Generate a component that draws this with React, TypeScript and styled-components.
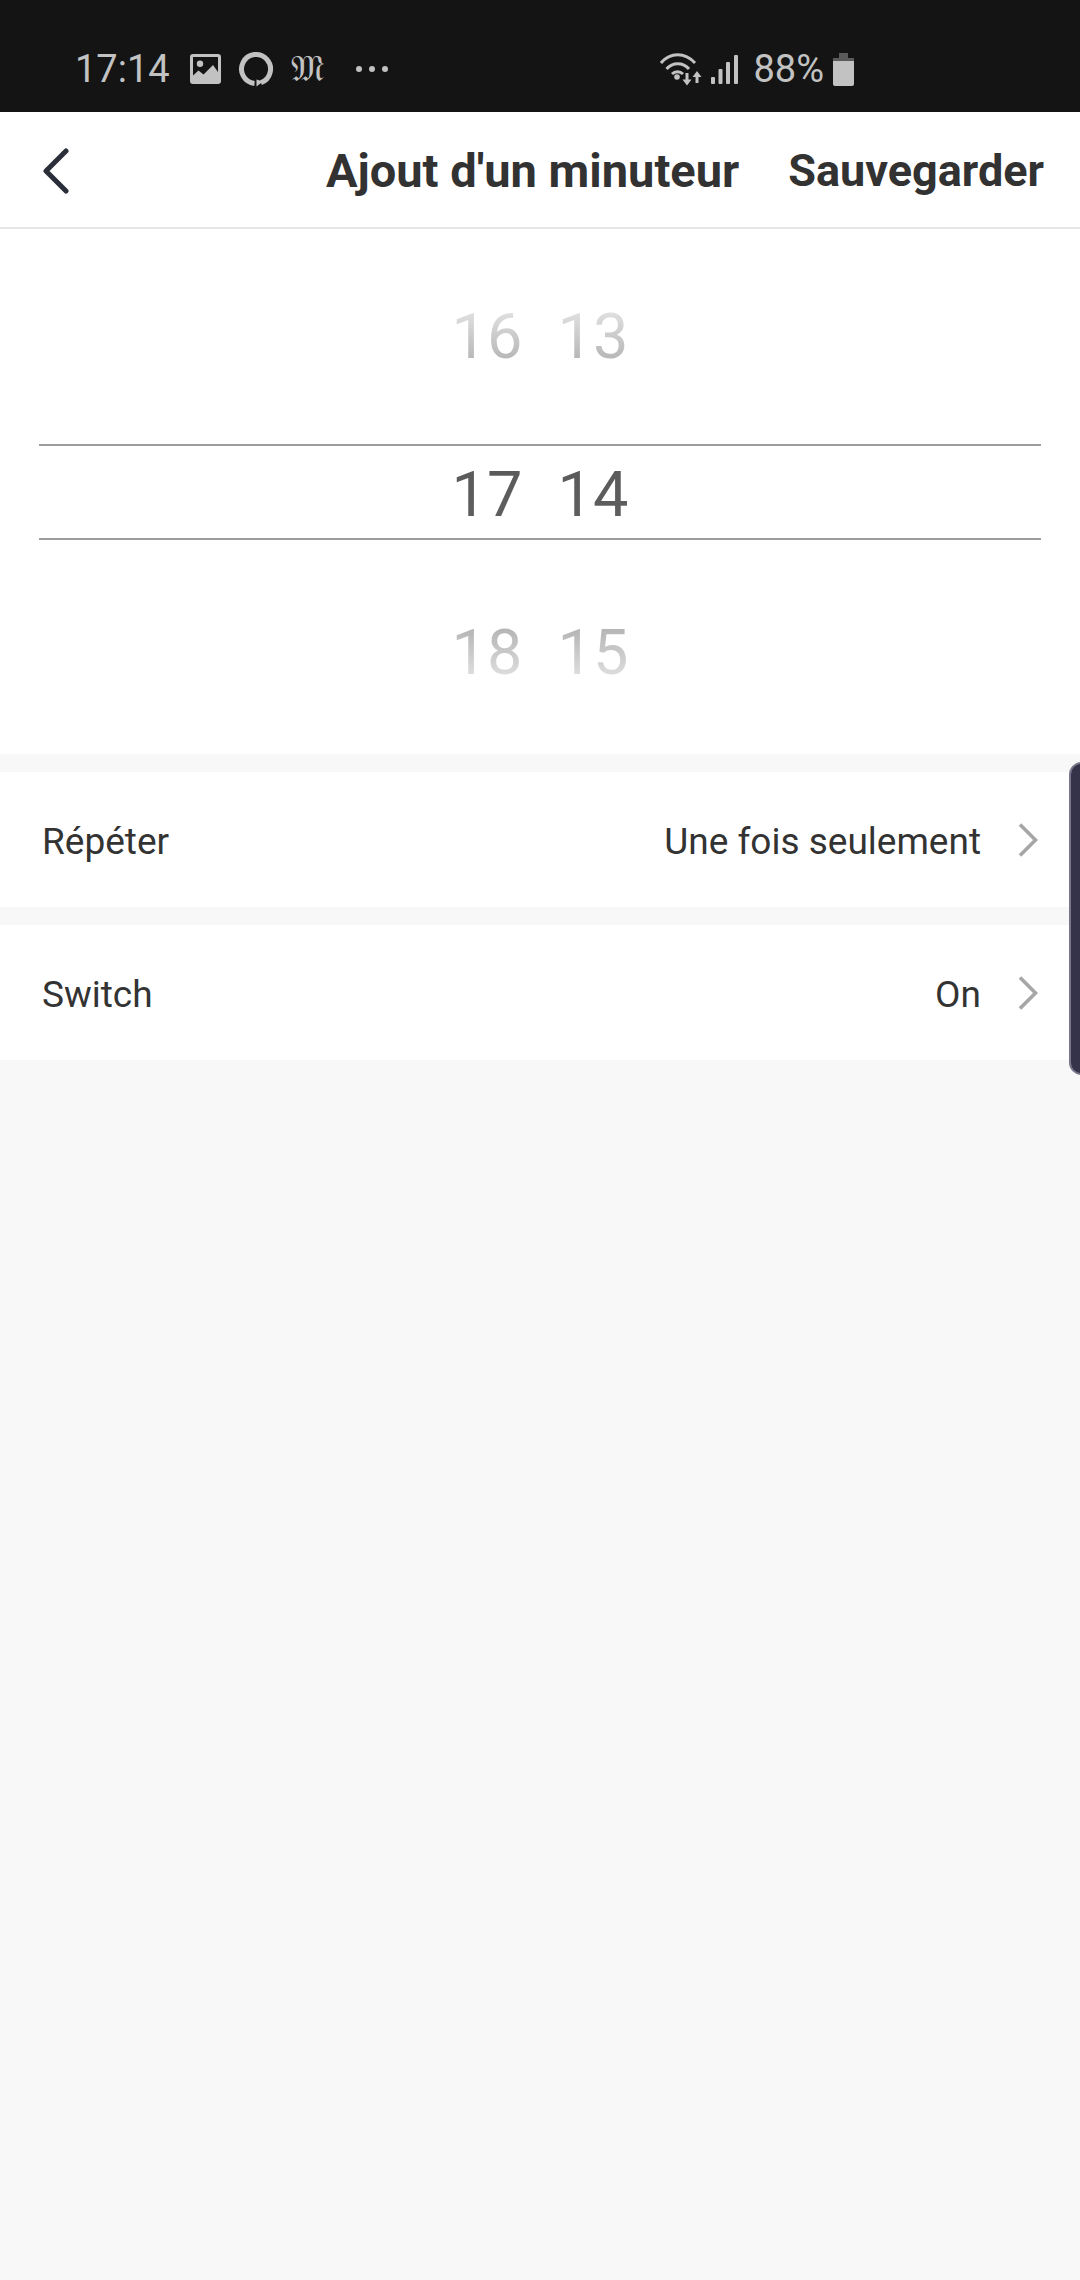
import styled, { createGlobalStyle } from 'styled-components';

const GlobalStyle = createGlobalStyle`
  html, body {
    margin: 0;
    padding: 0;
    background: #f8f8f8;
  }
  * {
    box-sizing: border-box;
  }
`;

const Page = styled.div`
  position: relative;
  width: 1080px;
  height: 2280px;
  overflow: hidden;
  display: flex;
  flex-direction: column;
  background: #f8f8f8;
  font-family: Roboto, 'Liberation Sans', sans-serif;
`;

const StatusBar = styled.div`
  height: 112px;
  flex: none;
  display: flex;
  align-items: center;
  padding: 26px 0 0 75px;
  background: #141414;
  color: #c2c2c2;
`;

const StatusText = styled.span<{ $left?: number }>`
  margin-left: ${(p) => p.$left ?? 0}px;
  font-size: 38px;
  line-height: 44px;
`;

const LeftIcons = styled.div`
  display: flex;
  align-items: center;
  margin-left: 20px;
`;

const RightIcons = styled.div`
  display: flex;
  align-items: center;
  margin-left: auto;
  padding-right: 226px;
`;

const StatusIcon = styled.svg<{ $left?: number }>`
  display: block;
  flex: none;
  margin-left: ${(p) => p.$left ?? 0}px;
`;

const Blackletter = styled.span`
  width: 32px;
  margin-left: 17px;
  font-family: 'DejaVu Sans', 'DejaVu Serif', serif;
  font-size: 36px;
  line-height: 36px;
  text-align: center;
`;

const NavBar = styled.div`
  height: 117px;
  flex: none;
  display: flex;
  align-items: center;
  padding: 2px 36px 0 39px;
  background: #fff;
  border-bottom: 2px solid #e5e5e5;
  color: #323232;
`;

const BackIcon = styled.svg`
  display: block;
  flex: none;
`;

const Title = styled.div`
  margin-left: auto;
  font-size: 47px;
  font-weight: 700;
  line-height: 56px;
  white-space: nowrap;
`;

const SaveLabel = styled.div`
  margin-left: 49px;
  font-size: 45px;
  font-weight: 700;
  line-height: 56px;
  white-space: nowrap;
`;

const Picker = styled.div`
  height: 525px;
  flex: none;
  display: flex;
  flex-direction: column;
  padding: 0 39px;
  background: #fff;
`;

type Tone = 'above' | 'selected' | 'below';

const PickerRow = styled.div<{ $tone: Tone }>`
  height: ${(p) => (p.$tone === 'selected' ? 96 : p.$tone === 'above' ? 215 : 214)}px;
  flex: none;
  display: flex;
  align-items: center;
  justify-content: center;
  gap: 35px;
  padding-top: ${(p) => (p.$tone === 'below' ? 12 : p.$tone === 'selected' ? 6 : 0)}px;
  ${(p) =>
    p.$tone === 'selected' &&
    `
    border-top: 2px solid #9c9c9c;
    border-bottom: 2px solid #9c9c9c;
  `}
`;

const Digit = styled.span<{ $tone: Tone }>`
  width: 71px;
  font-size: 63px;
  font-weight: 400;
  line-height: 64px;
  text-align: center;
  color: transparent;
  background: ${(p) =>
    p.$tone === 'above'
      ? 'linear-gradient(#dedede 14%, #b6b6b6 86%)'
      : p.$tone === 'below'
        ? 'linear-gradient(#b6b6b6 14%, #dedede 86%)'
        : 'linear-gradient(#5a5a5a, #5f5f5f)'};
  -webkit-background-clip: text;
  background-clip: text;
`;

const Row = styled.div`
  height: 135px;
  flex: none;
  display: flex;
  align-items: center;
  margin-top: 18px;
  padding: 4px 42px 0 42px;
  background: #fff;
  color: #333;
  font-size: 37px;
  line-height: 44px;
`;

const RowValue = styled.span`
  margin-left: auto;
`;

const Chevron = styled.svg`
  display: block;
  flex: none;
  margin: -4px 0 0 37px;
`;

const EdgeHandle = styled.div`
  position: absolute;
  top: 762px;
  right: -14px;
  width: 25px;
  height: 313px;
  border: 2px solid #77768a;
  border-radius: 14px;
  background: #34334a;
`;

const pickerRows = [
  { tone: 'above', hour: '16', minute: '13' },
  { tone: 'selected', hour: '17', minute: '14' },
  { tone: 'below', hour: '18', minute: '15' },
] as const;

function RowChevron() {
  return (
    <Chevron width="20" height="34" viewBox="0 0 20 34" fill="none">
      <path d="M2 1.500 17.500 17 2 32.500" stroke="#a6a6a6" strokeWidth="3.600" />
    </Chevron>
  );
}

export default function App() {
  return (
    <>
      <GlobalStyle />
      <Page>
        <StatusBar>
          <StatusText>17:14</StatusText>
          <LeftIcons>
            <StatusIcon width="31" height="30" viewBox="0 0 31 30">
              <path
                fill="#c2c2c2"
                fillRule="evenodd"
                d="M3 0h25a3 3 0 0 1 3 3v24a3 3 0 0 1-3 3H3a3 3 0 0 1-3-3V3a3 3 0 0 1 3-3Zm7 6.500a3.200 3.200 0 1 0 0 6.400 3.200 3.200 0 0 0 0-6.400ZM3 3v18.500l5.500-5 5 4L23 11l5 7V3Z"
              />
            </StatusIcon>
            <StatusIcon width="36" height="36" viewBox="0 0 36 36" $left={17} fill="none">
              <path
                d="M16.500 32.400A14.500 14.500 0 1 1 23 31.600"
                stroke="#c2c2c2"
                strokeWidth="5"
              />
              <path d="M18.500 28.500v7l6.500-5Z" fill="#c2c2c2" />
            </StatusIcon>
            <Blackletter>𝔐</Blackletter>
            <StatusIcon width="34" height="8" viewBox="0 0 34 8" $left={32} fill="#c2c2c2">
              <circle cx="4" cy="4" r="3" />
              <circle cx="17" cy="4" r="3" />
              <circle cx="30" cy="4" r="3" />
            </StatusIcon>
          </LeftIcons>
          <RightIcons>
            <StatusIcon width="42" height="33" viewBox="0 0 42 33" fill="none">
              <g stroke="#c2c2c2" strokeWidth="3">
                <path d="M1 10C10 -1 25 -1 35 10" />
                <path d="M6.500 16C12.500 9 23 9 29 16" />
                <path d="M12 21C15 18 20 18 23 21" />
                <path d="M27 20v9" />
                <path d="M37 21v9" />
              </g>
              <circle cx="17" cy="24" r="2.800" fill="#c2c2c2" />
              <path d="M22.500 26.500h9L27 32.500ZM32.500 24h9L37 18Z" fill="#c2c2c2" />
            </StatusIcon>
            <StatusIcon width="27" height="29" viewBox="0 0 27 29" $left={9} fill="#c2c2c2">
              <rect x="0" y="22" width="4" height="7" rx="1" />
              <rect x="7.500" y="14" width="4" height="15" rx="1" />
              <rect x="15" y="7" width="4" height="22" rx="1" />
              <rect x="23" y="0" width="4" height="29" rx="1" />
            </StatusIcon>
            <StatusText $left={15}>88%</StatusText>
            <StatusIcon width="21" height="33" viewBox="0 0 21 33" $left={9}>
              <path d="M6 0h9v5h6v4H0V5h6Z" fill="#5a5a5a" />
              <path d="M0 8h21v23a2 2 0 0 1-2 2H2a2 2 0 0 1-2-2Z" fill="#c2c2c2" />
            </StatusIcon>
          </RightIcons>
        </StatusBar>
        <NavBar>
          <BackIcon width="32" height="46" viewBox="0 0 32 46" fill="none">
            <path
              d="M27 3 7 23l20 20"
              stroke="#2a2e38"
              strokeWidth="5"
              strokeLinecap="round"
              strokeLinejoin="round"
            />
          </BackIcon>
          <Title>Ajout d'un minuteur</Title>
          <SaveLabel>Sauvegarder</SaveLabel>
        </NavBar>
        <Picker>
          {pickerRows.map((row) => (
            <PickerRow key={row.hour} $tone={row.tone}>
              <Digit $tone={row.tone}>{row.hour}</Digit>
              <Digit $tone={row.tone}>{row.minute}</Digit>
            </PickerRow>
          ))}
        </Picker>
        <Row>
          Répéter
          <RowValue>Une fois seulement</RowValue>
          <RowChevron />
        </Row>
        <Row>
          Switch
          <RowValue>On</RowValue>
          <RowChevron />
        </Row>
        <EdgeHandle />
      </Page>
    </>
  );
}
